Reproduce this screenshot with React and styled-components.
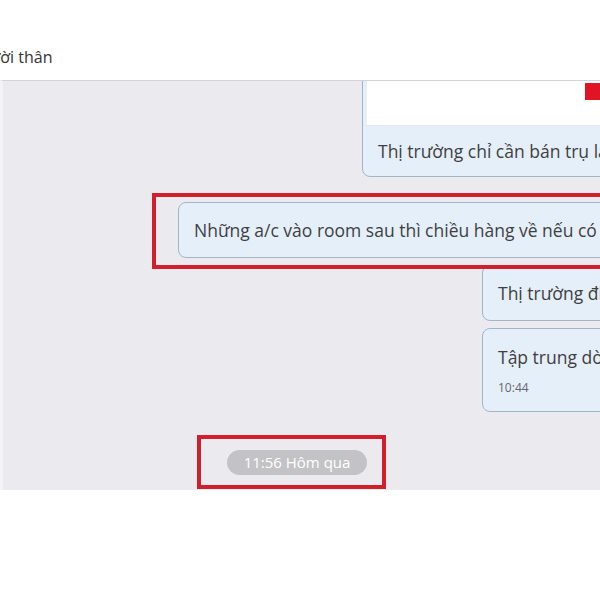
import React from 'react';
import styled, { createGlobalStyle } from 'styled-components';

const GlobalStyle = createGlobalStyle`
    body {
        margin: 0;
        background: #fff;
        overflow: hidden;
        font-family: "Open Sans", "Noto Sans", sans-serif;
    }
`;

// Page
const Page = styled.div`
    width: 600px;
    height: 600px;
    display: flex;
    flex-direction: column;
    background: #fff;
    overflow: hidden;
`;

// Header with the conversation name (cut off on the left)
const Header = styled.div`
    height: 80px;
    box-sizing: border-box;
    padding-top: 47px;
    overflow: hidden;
`;

const Title = styled.div`
    margin-left: -31px;
    font-size: 16px;
    line-height: 20px;
    color: #333;
    white-space: nowrap;
`;

// Chat area
const Chat = styled.div`
    height: 410px;
    box-sizing: border-box;
    display: flex;
    flex-direction: column;
    align-items: flex-start;
    background: #ebebef;
    border-top: 1px solid #d3d3d6;
    border-left: 3px solid #f3f3f5;
    overflow: hidden;
`;

const Row = styled.div`
    display: flex;
    flex-shrink: 0;
    margin-left: ${p => p.offset}px;
    margin-top: ${p => p.gap || 0}px;
`;

const Bubble = styled.div`
    flex-shrink: 0;
    background: #e5effa;
    border: 1px solid #a3b4c6;
    border-radius: 8px;
    overflow: hidden;
    white-space: nowrap;
`;

const Media = styled.div`
    height: 80px;
    margin: 4px 4px 0;
    padding: 37px 0 0 218px;
    box-sizing: border-box;
    background: #fff;
    border-bottom: 1px solid #dfe6ee;
`;

const RedMark = styled.div`
    width: 24px;
    height: 17px;
    background: #e01424;
`;

const Text = styled.div`
    padding: ${p => p.pad || '15px 15px'};
    font-size: 17.5px;
    line-height: 24px;
    color: #3f3f3f;
`;

const Time = styled.div`
    margin-top: 11px;
    font-size: 12px;
    line-height: 16px;
    color: #666;
`;

// Red annotation frames drawn over the screenshot
const Highlight = styled.div`
    position: relative;
    z-index: 1;
    &::after {
        content: '';
        position: absolute;
        top: ${p => p.inset[0]}px;
        right: ${p => p.inset[1]}px;
        bottom: ${p => p.inset[2]}px;
        left: ${p => p.inset[3]}px;
        border: 4px solid #d21f2c;
        pointer-events: none;
    }
`;

const Pill = styled.div`
    width: 140px;
    height: 25px;
    border-radius: 13px;
    background: #c3c3c6;
    color: #fff;
    font-size: 15px;
    line-height: 25px;
    text-align: center;
`;

export default function App() {
    return (
        <Page>
            <GlobalStyle />
            <Header>
                <Title>Người thân</Title>
            </Header>
            <Chat>
                <Row offset={359} gap={-40}>
                    <Bubble>
                        <Media>
                            <RedMark />
                        </Media>
                        <Text pad="13px 15px">Thị trường chỉ cần bán trụ lại là sẽ hồi phục</Text>
                    </Bubble>
                </Row>
                <Row offset={175} gap={25}>
                    <Highlight inset={[-9, -200, -11, -26]}>
                        <Bubble>
                            <Text>Những a/c vào room sau thì chiều hàng về nếu có thời gian xem lại</Text>
                        </Bubble>
                    </Highlight>
                </Row>
                <Row offset={479} gap={7}>
                    <Bubble>
                        <Text>Thị trường điều chỉnh nhẹ cuối phiên</Text>
                    </Bubble>
                </Row>
                <Row offset={479} gap={7}>
                    <Bubble>
                        <Text pad="16px 15px 15px">
                            Tập trung dòng tiền vào cổ phiếu tốt
                            <Time>10:44</Time>
                        </Text>
                    </Bubble>
                </Row>
                <Row offset={224} gap={38}>
                    <Highlight inset={[-15, -19, -14, -30]}>
                        <Pill>11:56 Hôm qua</Pill>
                    </Highlight>
                </Row>
            </Chat>
        </Page>
    );
}
